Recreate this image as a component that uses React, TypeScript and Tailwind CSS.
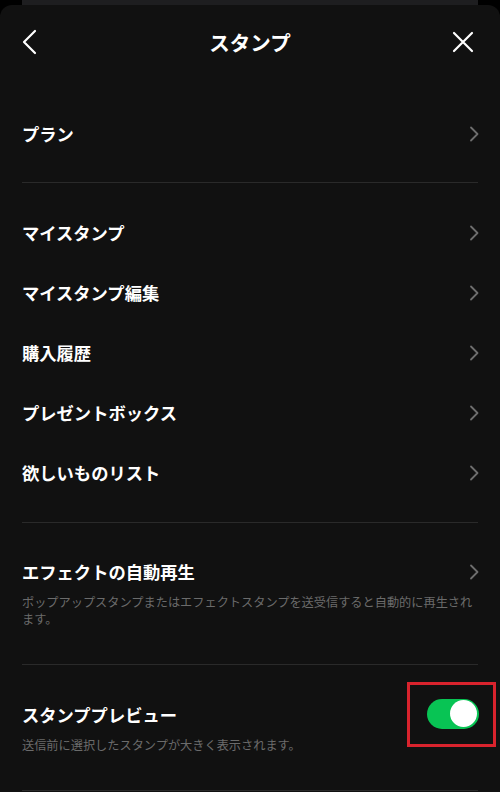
import React from "react";

const font = { fontFamily: '"Noto Sans CJK JP", "Noto Sans", sans-serif' };

function ChevronRight() {
  return (
    <svg width="10" height="16" viewBox="0 0 10 16" fill="none" className="shrink-0">
      <path d="M2 1.5 L8.5 8 L2 14.5" stroke="#6e6e6e" strokeWidth="1.8" strokeLinecap="round" strokeLinejoin="round" />
    </svg>
  );
}

function Row({ label }: { label: string }) {
  return (
    <div className="h-[60px] flex items-center justify-between pl-[22px] pr-[21px]">
      <span className="text-[17.3px] font-bold text-white leading-[20px]">{label}</span>
      <ChevronRight />
    </div>
  );
}

function Divider() {
  return <div className="h-px mx-[22px] bg-[#2a2a2a]" />;
}

export default function App() {
  return (
    <div className="w-[500px] h-[792px] bg-black overflow-hidden flex flex-col" style={font}>
      <div className="h-[5px] shrink-0 mx-[22px] bg-[#1e1e20]" />
      <div className="flex-1 bg-[#111111] rounded-t-[12px]">
        <div className="h-[74px] grid grid-cols-[60px_1fr_60px] items-center px-[20px]">
          <div className="flex items-center">
            <svg width="18" height="26" viewBox="0 0 18 26" fill="none" className="ml-[1px]">
              <path d="M14 2 L3 13 L14 24" stroke="white" strokeWidth="2.2" strokeLinecap="round" strokeLinejoin="round" />
            </svg>
          </div>
          <div className="text-center text-white text-[20.5px] font-bold leading-[24px]">スタンプ</div>
          <div className="flex items-center justify-end">
            <svg width="24" height="24" viewBox="0 0 24 24" fill="none" className="mr-[5px]">
              <path d="M3 3 L21 21 M21 3 L3 21" stroke="white" strokeWidth="2.2" strokeLinecap="round" />
            </svg>
          </div>
        </div>

        <div className="pt-[25px] pb-[18px]">
          <Row label="プラン" />
        </div>
        <Divider />

        <div className="pt-[20px] pb-[19px]">
          <Row label="マイスタンプ" />
          <Row label="マイスタンプ編集" />
          <Row label="購入履歴" />
          <Row label="プレゼントボックス" />
          <Row label="欲しいものリスト" />
        </div>
        <Divider />

        <div className="pt-[39px] pb-[36px] pl-[22px] pr-[21px]">
          <div className="h-[20px] flex items-center justify-between">
            <span className="text-[17.3px] font-bold text-white leading-[20px]">エフェクトの自動再生</span>
            <ChevronRight />
          </div>
          <p className="mt-[12px] text-[12.2px] leading-[17px] text-[#6b6b6b]">
            ポップアップスタンプまたはエフェクトスタンプを送受信すると自動的に再生されます。
          </p>
        </div>
        <Divider />

        <div className="pt-[40px] pb-[36px] pl-[22px] pr-[21px]">
          <div className="h-[20px] flex items-center justify-between">
            <span className="text-[17.3px] font-bold text-white leading-[20px]">スタンププレビュー</span>
            <div className="relative w-[52px] h-[30px] rounded-full bg-[#08c454] flex items-center justify-end pr-[2px] -mt-[3px]">
              <div className="w-[27px] h-[27px] rounded-full bg-white" />
              <div className="absolute -left-[20px] -right-[17px] -top-[17px] -bottom-[18px] border-[3px] border-[#d9232d]" />
            </div>
          </div>
          <p className="mt-[12px] text-[12.2px] leading-[17px] text-[#6b6b6b]">
            送信前に選択したスタンプが大きく表示されます。
          </p>
        </div>
        <Divider />
      </div>
    </div>
  );
}
